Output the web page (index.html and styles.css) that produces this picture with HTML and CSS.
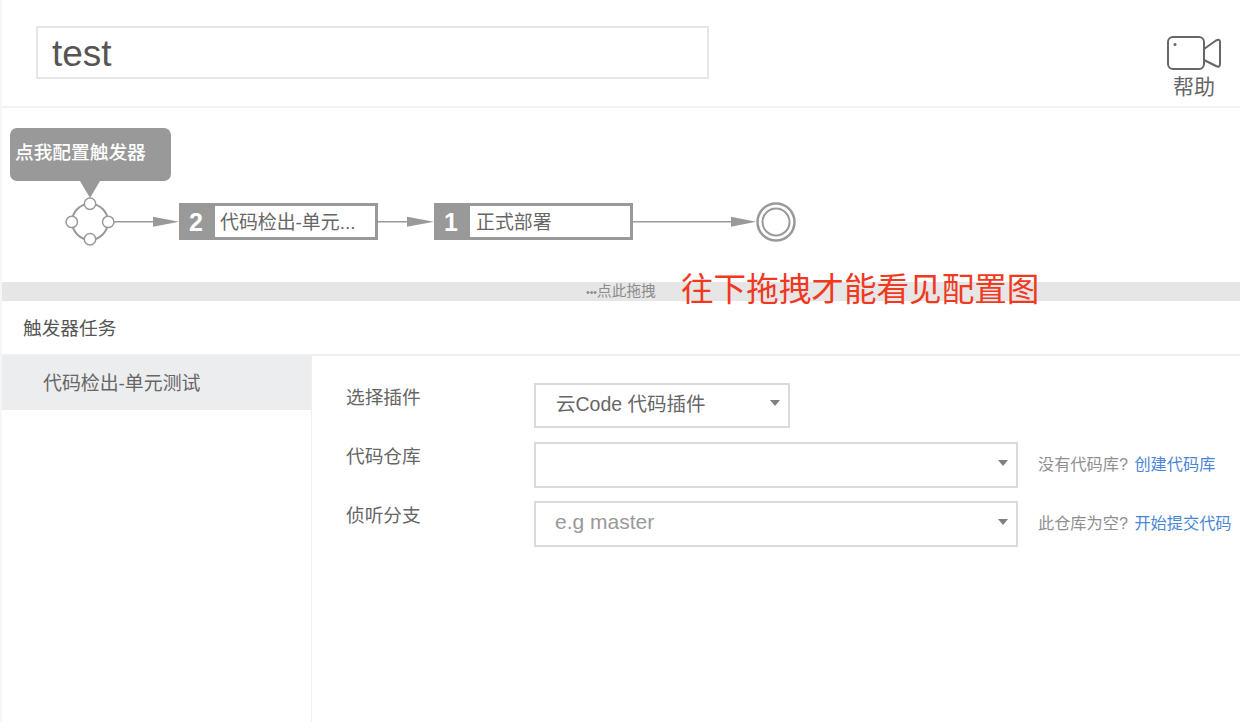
FILE: index.html
```html
<!DOCTYPE html>
<html lang="zh-CN">
<head>
<meta charset="utf-8">
<title>test</title>
<link rel="stylesheet" href="styles.css">
</head>
<body>
<div class="page">
  <header class="header">
    <div class="title-input">test</div>
    <div class="help">
      <svg class="help-icon" width="56" height="37" viewBox="0 0 56 37">
        <rect x="2" y="2" width="36" height="32" rx="5" fill="none" stroke="#666" stroke-width="2"/>
        <path d="M38 14 L50 5.500 Q54 3.500 54 7 V29 Q54 33 50 31 L38 25" fill="none" stroke="#666" stroke-width="2" stroke-linejoin="round"/>
        <circle cx="9" cy="9.500" r="1.500" fill="#666"/>
      </svg>
      <span class="help-label">帮助</span>
    </div>
  </header>

  <section class="canvas">
    <div class="tooltip">点我配置触发器</div>
    <div class="flow">
      <svg class="start" width="46" height="48" viewBox="0 0 46 48">
        <circle cx="23" cy="24.700" r="18" fill="none" stroke="#999" stroke-width="2"/>
        <g fill="#fff" stroke="#999" stroke-width="1.500">
          <circle cx="23" cy="6.700" r="5.700"/>
          <circle cx="4.800" cy="24.900" r="5.700"/>
          <circle cx="41.200" cy="24.900" r="5.700"/>
          <circle cx="23" cy="42.300" r="5.700"/>
        </g>
      </svg>
      <svg class="arrow" width="66" height="12" viewBox="0 0 66 12">
        <path d="M0 6.700 H45" stroke="#999" stroke-width="1.500"/>
        <path d="M40 1.700 L66 6.700 L40 11.700 Z" fill="#999"/>
      </svg>
      <div class="task">
        <span class="task-num">2</span>
        <span class="task-name">代码检出-单元...</span>
      </div>
      <svg class="arrow" width="56" height="12" viewBox="0 0 56 12">
        <path d="M0 6.700 H35" stroke="#999" stroke-width="1.500"/>
        <path d="M29 1.700 L56 6.700 L29 11.700 Z" fill="#999"/>
      </svg>
      <div class="task">
        <span class="task-num">1</span>
        <span class="task-name task-name-short">正式部署</span>
      </div>
      <svg class="arrow" width="123" height="12" viewBox="0 0 123 12">
        <path d="M0 6.700 H105" stroke="#999" stroke-width="1.500"/>
        <path d="M98 1.700 L123 6.700 L98 11.700 Z" fill="#999"/>
      </svg>
      <svg class="end" width="40" height="42" viewBox="0 0 40 42">
        <circle cx="20" cy="22" r="18.500" fill="#fff" stroke="#999" stroke-width="2.500"/>
        <circle cx="20" cy="22" r="13.500" fill="#fff" stroke="#999" stroke-width="2"/>
      </svg>
    </div>
  </section>

  <div class="dragbar">
    <span class="drag-text"><span class="drag-dots">•••</span>点此拖拽</span>
    <span class="drag-note">往下拖拽才能看见配置图</span>
  </div>

  <div class="section-title">触发器任务</div>

  <div class="body">
    <aside class="sidebar">
      <div class="side-item">代码检出-单元测试</div>
    </aside>
    <main class="form">
      <div class="form-label">选择插件</div>
      <div class="select select-short"><span>云Code 代码插件</span><i class="caret"></i></div>
      <div></div>

      <div class="form-label">代码仓库</div>
      <div class="select"><span></span><i class="caret"></i></div>
      <div class="hint">没有代码库? <a class="link">创建代码库</a></div>

      <div class="form-label">侦听分支</div>
      <div class="select"><span class="placeholder">e.g master</span><i class="caret"></i></div>
      <div class="hint">此仓库为空? <a class="link">开始提交代码</a></div>
    </main>
  </div>
</div>
</body>
</html>
```

FILE: styles.css
```css
* { box-sizing: border-box; }
html, body { margin: 0; padding: 0; background: #fff; }
body {
  font-family: "Liberation Sans", "Noto Sans CJK SC", sans-serif;
  color: #666;
}
.page {
  width: 1240px;
  height: 722px;
  overflow: hidden;
  display: flex;
  flex-direction: column;
  border-left: 2px solid #f6f6f6;
}
.header {
  height: 108px;
  flex: none;
  display: flex;
  justify-content: space-between;
  padding: 26px 18px 0 34px;
  border-bottom: 2px solid #f2f2f2;
}
.title-input {
  width: 673px;
  height: 53px;
  border: 2px solid #e6e6e6;
  padding-left: 14px;
  font-size: 37px;
  line-height: 52px;
  color: #555;
}
.help {
  display: flex;
  flex-direction: column;
  align-items: center;
  margin-top: 9px;
}
.help-icon { display: block; }
.help-label { font-size: 21px; line-height: 30px; }

.canvas {
  position: relative;
  height: 174px;
  flex: none;
  padding: 93px 0 0 65px;
}
.tooltip {
  position: absolute;
  left: 8px;
  top: 20px;
  width: 161px;
  height: 53px;
  background: #999;
  border-radius: 7px;
  color: #fff;
  font-size: 18.700px;
  font-weight: 500;
  line-height: 50px;
  padding-left: 5px;
}
.tooltip::after {
  content: "";
  position: absolute;
  left: 70px;
  top: 53px;
  border-left: 10px solid transparent;
  border-right: 10px solid transparent;
  border-top: 17px solid #999;
}
.flow { display: flex; align-items: center; height: 40px; }
.start, .arrow, .end { display: block; flex: none; overflow: visible; }
.task {
  width: 199px;
  height: 37px;
  flex: none;
  display: flex;
  border: 3px solid #999;
  background: #fff;
}
.task-num {
  width: 33px;
  background: #999;
  color: #fff;
  font-size: 25px;
  font-weight: 700;
  line-height: 33px;
  text-align: center;
  padding-right: 5px;
}
.task-name {
  font-size: 18.900px;
  line-height: 34px;
  padding-left: 5px;
  color: #666;
}
.task-name-short { padding-left: 6px; }

.dragbar {
  height: 19px;
  flex: none;
  background: #e6e6e6;
  display: flex;
  align-items: center;
  padding-left: 584px;
}
.drag-text { font-size: 14.700px; color: #8c8c8c; line-height: 19px; width: 95px; flex: none; white-space: nowrap; }
.drag-dots { font-size: 10.500px; }
.drag-note { font-size: 32.600px; color: #f0391f; line-height: 19px; white-space: nowrap; position: relative; top: -2px; }

.section-title {
  height: 55px;
  flex: none;
  border-bottom: 2px solid #f0f0f0;
  padding-left: 21px;
  font-size: 18.700px;
  line-height: 55px;
  color: #555;
}
.body { flex: 1; display: flex; min-height: 0; }
.sidebar {
  width: 310px;
  flex: none;
  border-right: 1px solid #f0f0f0;
}
.side-item {
  height: 54px;
  background: #ecedef;
  padding-left: 41px;
  font-size: 18.900px;
  line-height: 55px;
}
.form {
  flex: 1;
  display: grid;
  grid-template-columns: 188px 484px auto;
  grid-auto-rows: 45px;
  row-gap: 14px;
  padding: 27px 0 0 34px;
  align-content: start;
}
.form-label { font-size: 18.700px; line-height: 30px; color: #666; }
.select {
  height: 46px;
  border: 2px solid #dadada;
  display: flex;
  align-items: center;
  justify-content: space-between;
  padding: 0 8px 4px 20px;
  font-size: 19.500px;
  color: #666;
}
.select-short { width: 256px; height: 45px; padding-bottom: 6px; }
.placeholder { color: #999; font-size: 21px; margin-left: -1px; }
.caret {
  width: 0;
  height: 0;
  border-left: 5.500px solid transparent;
  border-right: 5.500px solid transparent;
  border-top: 6px solid #808080;
}
.hint {
  font-size: 16.200px;
  line-height: 45px;
  padding-left: 20px;
  color: #8f8f8f;
  white-space: nowrap;
}
.link { color: #4a86d4; margin-left: 2px; }
```
